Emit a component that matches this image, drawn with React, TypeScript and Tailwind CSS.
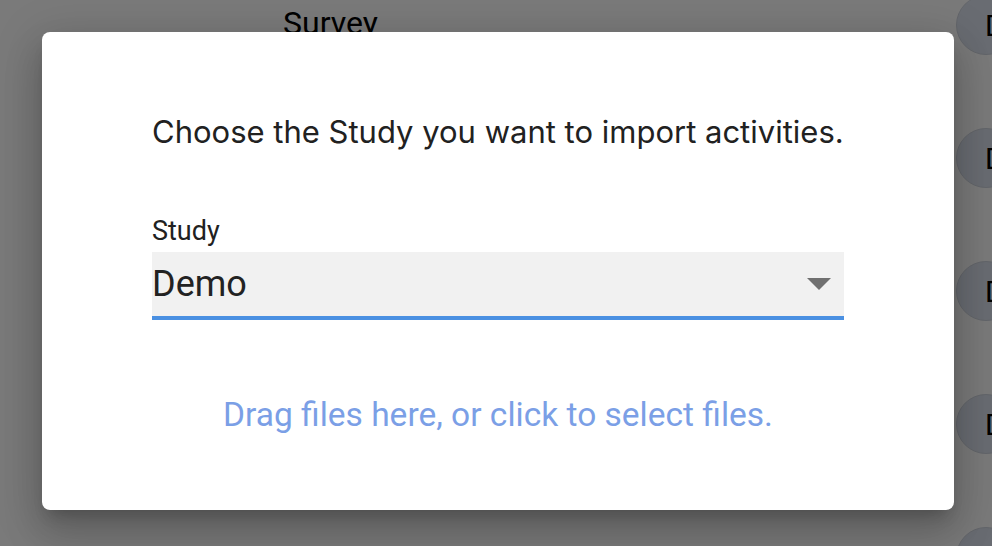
import React from 'react';

const rows = [0, 1, 2, 3, 4];

const App: React.FC = () => {
  return (
    <div className="relative w-[992px] h-[546px] overflow-hidden bg-white font-['Roboto',sans-serif]">
      {/* page behind the dialog */}
      <div className="flex h-full">
        <div className="flex-1 pl-[283px] pt-[4px] text-[32px] leading-[38px] text-black">Survey</div>
        <div className="w-[36px] flex flex-col gap-[73px] -mt-[5px]">
          {rows.map((r) => (
            <div
              key={r}
              className="shrink-0 w-[60px] h-[60px] rounded-full bg-[#dce2ee] border border-[#cfd4de] flex items-center pl-[28px] text-[30px] text-black"
            >
              D
            </div>
          ))}
        </div>
      </div>

      {/* backdrop + dialog */}
      <div className="absolute inset-0 bg-black/[0.52] flex items-start">
        <div className="ml-[42px] mt-[32px] w-[912px] h-[478px] bg-white rounded-[8px] shadow-[0_11px_15px_-7px_rgba(0,0,0,0.2),0_24px_38px_3px_rgba(0,0,0,0.14),0_9px_46px_8px_rgba(0,0,0,0.12)] pl-[110px] pt-[80px]">
          <div className="w-[692px]">
            <p className="font-['Inter',sans-serif] text-[31px] leading-[40px] text-[#212121] whitespace-nowrap">
              Choose the Study you want to import activities.
            </p>
            <div className="mt-[64px]">
              <div className="text-[27px] leading-[30px] text-[#212121]">Study</div>
              <div className="mt-[6px] h-[68px] bg-[#f1f1f1] border-b-4 border-[#4a90e2] flex items-center justify-between">
                <span className="text-[36px] leading-[40px] text-[#222]">Demo</span>
                <svg width="24" height="12" viewBox="0 0 24 12" className="mr-[13px]">
                  <path d="M0 0 L24 0 L12 12 Z" fill="#707070" />
                </svg>
              </div>
            </div>
            <div className="mt-[75px] text-center text-[33.5px] leading-[40px] text-[#7b9fe6] whitespace-nowrap">
              Drag files here, or click to select files.
            </div>
          </div>
        </div>
      </div>
    </div>
  );
};

export default App;
